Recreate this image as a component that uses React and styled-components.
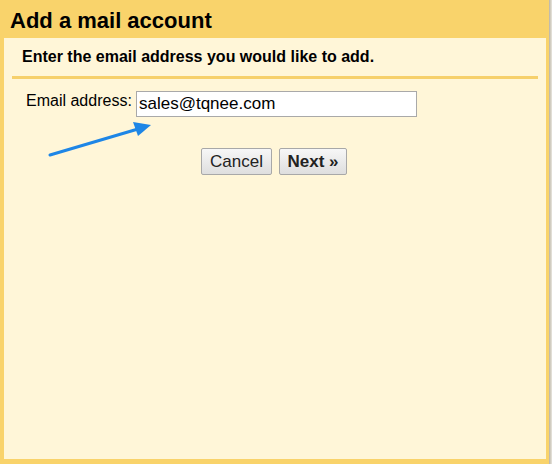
import React from 'react'
import styled, { createGlobalStyle } from 'styled-components'

const GlobalStyle = createGlobalStyle`
  html, body {
    margin: 0;
    padding: 0;
  }
  body {
    font-family: "Liberation Sans", Arial, sans-serif;
    color: #000;
  }
`

const Page = styled.div`
  width: 552px;
  height: 464px;
  display: flex;
  position: relative;
  overflow: hidden;
`

const Frame = styled.div`
  flex: 1;
  display: flex;
  flex-direction: column;
  background: #f9d36b;
  padding: 0 3px 5px 4px;
`

const Edge = styled.div`
  width: 3px;
  background: linear-gradient(to right, #b9b3a3, #e9e6df);
`

const Header = styled.h1`
  margin: 0;
  height: 38px;
  line-height: 41px;
  padding-left: 6px;
  font-size: 22px;
  font-weight: bold;
`

const Body = styled.div`
  flex: 1;
  background: #fff6d8;
  padding: 0 8px;
`

const Intro = styled.p`
  box-sizing: border-box;
  margin: 0;
  padding: 10px 0 0 10px;
  height: 38px;
  font-size: 16px;
  font-weight: bold;
  line-height: 18px;
`

const Rule = styled.div`
  height: 3px;
  background: #f6d06b;
`

const Field = styled.div`
  display: flex;
  align-items: flex-start;
  margin-top: 12px;
  padding-left: 14px;
`

const Label = styled.label`
  width: 110px;
  font-size: 16px;
  line-height: 18px;
  padding-top: 1px;
`

const Input = styled.input`
  box-sizing: border-box;
  width: 281px;
  height: 26px;
  border: 1px solid #a9a9a9;
  background: #fff;
  font-family: "Liberation Sans", Arial, sans-serif;
  font-size: 17px;
  padding: 0 2px;
  outline: none;
`

const Actions = styled.div`
  display: flex;
  gap: 7px;
  margin-top: 31px;
  padding-left: 189px;
`

const Button = styled.button`
  box-sizing: border-box;
  height: 27px;
  width: ${p => p.$w}px;
  border: 1px solid #a8a8a8;
  border-radius: 2px;
  background: linear-gradient(to bottom, #f7f7f7, #dedede);
  font-family: "Liberation Sans", Arial, sans-serif;
  font-size: 17px;
  font-weight: ${p => (p.$primary ? 'bold' : 'normal')};
  color: #222;
  padding: 0;
`

const Arrow = styled.svg`
  position: absolute;
  left: 0;
  top: 0;
  pointer-events: none;
`

export default function App() {
  return (
    <>
      <GlobalStyle />
      <Page>
        <Frame>
          <Header>Add a mail account</Header>
          <Body>
            <Intro>Enter the email address you would like to add.</Intro>
            <Rule />
            <Field>
              <Label>Email address:</Label>
              <Input defaultValue="sales@tqnee.com" />
            </Field>
            <Actions>
              <Button $w={71}>Cancel</Button>
              <Button $w={68} $primary>Next »</Button>
            </Actions>
          </Body>
        </Frame>
        <Edge />
        <Arrow width="552" height="464">
          <line x1="50" y1="155" x2="138" y2="129" stroke="#1e86e6" strokeWidth="3" strokeLinecap="round" />
          <polygon points="151,125 133,122 138,136" fill="#1e86e6" />
        </Arrow>
      </Page>
    </>
  )
}
